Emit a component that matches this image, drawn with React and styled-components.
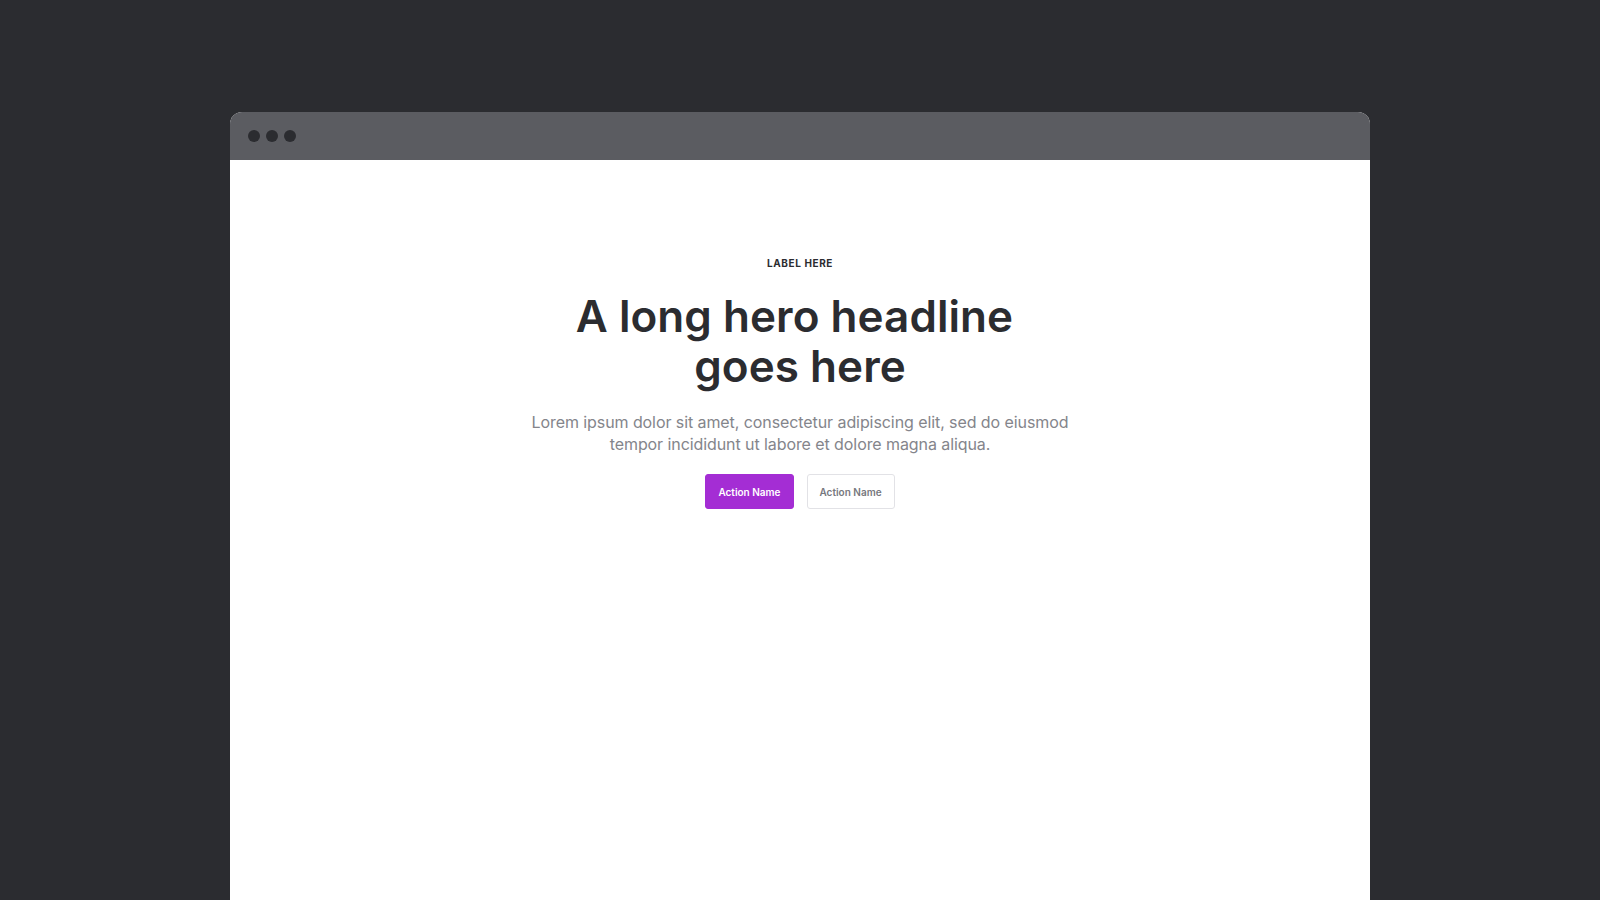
import React from "react";
import styled, { createGlobalStyle } from "styled-components";

const Global = createGlobalStyle`
  html, body { margin: 0; padding: 0; background: #2b2c30; }
  body { font-family: Inter, "Noto Sans", sans-serif; -webkit-font-smoothing: antialiased; }
  * { box-sizing: border-box; }
`;

const Page = styled.div`
  width: 1600px;
  height: 900px;
  overflow: hidden;
  background: #2b2c30;
  padding: 112px 230px 0;
`;

const Window = styled.div`
  width: 1140px;
  height: 900px;
  display: flex;
  flex-direction: column;
  border-radius: 12px 12px 0 0;
  overflow: hidden;
  background: #ffffff;
`;

const TitleBar = styled.div`
  height: 48px;
  flex: none;
  background: #5b5c61;
  display: flex;
  align-items: center;
  gap: 6px;
  padding: 0 0 0 18px;
`;

const Dot = styled.span`
  width: 12px;
  height: 12px;
  border-radius: 50%;
  background: #2b2c30;
`;

const Hero = styled.section`
  display: flex;
  flex-direction: column;
  align-items: center;
  text-align: center;
  padding-top: 96px;
`;

const Label = styled.div`
  font-size: 10px;
  line-height: 14px;
  font-weight: 700;
  letter-spacing: 0.6px;
  color: #2b2c30;
  text-transform: uppercase;
  margin-bottom: 21px;
`;

const Headline = styled.h1`
  margin: 0 0 20px;
  font-size: 44px;
  line-height: 50px;
  font-weight: 600;
  letter-spacing: 0.05px;
  color: #2b2c30;
  max-width: 470px;
  white-space: break-spaces;
`;

const Lead = styled.p`
  margin: 0 0 19px;
  font-size: 16px;
  line-height: 22px;
  letter-spacing: -0.08px;
  color: #84858b;
  max-width: 570px;
`;

const Actions = styled.div`
  display: flex;
  gap: 13px;
`;

const Button = styled.button`
  font-family: Inter, "Noto Sans", sans-serif;
  font-size: 10px;
  line-height: 14px;
  font-weight: 600;
  height: 35px;
  padding: 0 12px;
  border-radius: 3px;
  cursor: pointer;
  border: 1px solid ${(p) => (p.$primary ? "#a42dd4" : "#e2e2e6")};
  background: ${(p) => (p.$primary ? "#a42dd4" : "#ffffff")};
  color: ${(p) => (p.$primary ? "#ffffff" : "#77787e")};
`;

export default function App() {
  return (
    <>
      <Global />
      <Page>
        <Window>
          <TitleBar>
            <Dot />
            <Dot />
            <Dot />
          </TitleBar>
          <Hero>
            <Label>Label Here</Label>
            <Headline>A long hero headline goes here</Headline>
            <Lead>
              Lorem ipsum dolor sit amet, consectetur adipiscing elit, sed do eiusmod tempor incididunt ut labore et dolore magna aliqua.
            </Lead>
            <Actions>
              <Button $primary>Action Name</Button>
              <Button>Action Name</Button>
            </Actions>
          </Hero>
        </Window>
      </Page>
    </>
  );
}
